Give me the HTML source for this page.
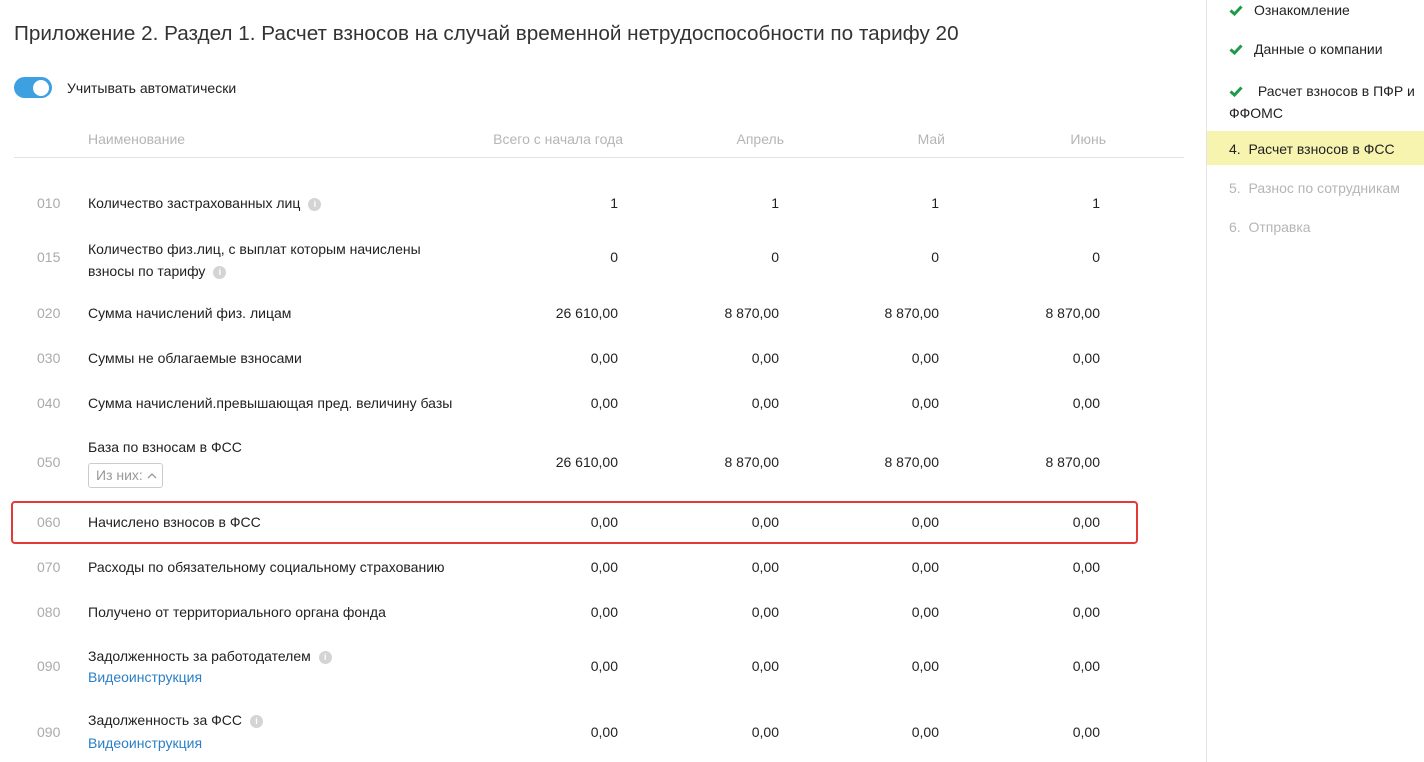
<!DOCTYPE html>
<html><head><meta charset="utf-8"><style>
body{margin:0;width:1424px;height:762px;position:relative;overflow:hidden;background:#fff;font-family:"Liberation Sans",Arial,sans-serif;font-size:14px;color:#222}
.a{position:absolute;white-space:nowrap}
.code{color:#aaa;left:37px}
.n{text-align:right;width:150px}
.g{color:#b5b5b5}
.i{display:inline-block;width:13px;height:13px;border-radius:50%;background:#d4d4d4;color:#fff;font-size:9px;text-align:center;line-height:13px;margin-left:8px;vertical-align:1px;font-weight:bold}
.lnk{color:#2a7fc6}
.ck{display:inline-block;width:14px;margin-right:11px;vertical-align:-1px}
</style></head><body>
<div class="a" style="left:14px;top:22px;font-size:20.7px;color:#333">Приложение 2. Раздел 1. Расчет взносов на случай временной нетрудоспособности по тарифу 20</div>
<div class="a" style="left:14px;top:77px;width:38px;height:21px;border-radius:11px;background:#3da0e0"><div style="position:absolute;right:3px;top:2.5px;width:16px;height:16px;border-radius:50%;background:#fff"></div></div>
<div class="a" style="left:67px;top:80px">Учитывать автоматически</div>
<div class="a g" style="left:88px;top:131px">Наименование</div>
<div class="a g n" style="left:473px;top:131px">Всего с начала года</div>
<div class="a g n" style="left:634px;top:131px">Апрель</div>
<div class="a g n" style="left:795px;top:131px">Май</div>
<div class="a g n" style="left:956px;top:131px">Июнь</div>
<div class="a" style="left:14px;top:157px;width:1170px;height:1px;background:#e3e3e3"></div>

<div class="a code" style="top:195px">010</div><div class="a" style="left:88px;top:195px">Количество застрахованных лиц<span class="i">i</span></div>
<div class="a code" style="top:249px">015</div><div class="a" style="left:88px;top:238px;line-height:22px">Количество физ.лиц, с выплат которым начислены<br>взносы по тарифу<span class="i">i</span></div>
<div class="a code" style="top:305px">020</div><div class="a" style="left:88px;top:305px">Сумма начислений физ. лицам</div>
<div class="a code" style="top:350px">030</div><div class="a" style="left:88px;top:350px">Суммы не облагаемые взносами</div>
<div class="a code" style="top:395px">040</div><div class="a" style="left:88px;top:395px">Сумма начислений.превышающая пред. величину базы</div>
<div class="a code" style="top:454px">050</div><div class="a" style="left:88px;top:439px">База по взносам в ФСС</div>
<div class="a" style="left:88px;top:463px;width:73px;height:23px;border:1px solid #ccc;border-radius:3px;color:#999;line-height:23px;text-indent:7px">Из них: <svg width="10" height="7" viewBox="0 0 10 7" style="vertical-align:1px"><path d="M1 6 L5 2 L9 6" fill="none" stroke="#999" stroke-width="1.3"/></svg></div>
<div class="a" style="left:11px;top:501px;width:1123px;height:39px;border:2px solid #e53935;border-radius:4px"></div>
<div class="a code" style="top:514px">060</div><div class="a" style="left:88px;top:514px">Начислено взносов в ФСС</div>
<div class="a code" style="top:559px">070</div><div class="a" style="left:88px;top:559px">Расходы по обязательному социальному страхованию</div>
<div class="a code" style="top:604px">080</div><div class="a" style="left:88px;top:604px">Получено от территориального органа фонда</div>
<div class="a code" style="top:658px">090</div><div class="a" style="left:88px;top:648px">Задолженность за работодателем<span class="i">i</span></div><div class="a lnk" style="left:88px;top:669px">Видеоинструкция</div>
<div class="a code" style="top:724px">090</div><div class="a" style="left:88px;top:712px">Задолженность за ФСС<span class="i">i</span></div><div class="a lnk" style="left:88px;top:735px">Видеоинструкция</div>

<div id="nums"></div>
<script>
var rows=[[195,"1","1","1","1"],[249,"0","0","0","0"],[305,"26 610,00","8 870,00","8 870,00","8 870,00"],[350,"0,00","0,00","0,00","0,00"],[395,"0,00","0,00","0,00","0,00"],[454,"26 610,00","8 870,00","8 870,00","8 870,00"],[514,"0,00","0,00","0,00","0,00"],[559,"0,00","0,00","0,00","0,00"],[604,"0,00","0,00","0,00","0,00"],[658,"0,00","0,00","0,00","0,00"],[724,"0,00","0,00","0,00","0,00"]];
var R=[618,779,939,1100],h="";
rows.forEach(function(r){for(var i=0;i<4;i++)h+='<div class="a n" style="left:'+(R[i]-150)+'px;top:'+r[0]+'px">'+r[i+1]+'</div>';});
document.getElementById('nums').innerHTML=h;
</script>

<div class="a" style="left:1206px;top:0;width:1px;height:762px;background:#e3e3e3"></div>
<div class="a" style="left:1207px;top:131px;width:217px;height:34px;background:#f7f4b0"></div>
<div class="a" style="left:1229px;top:2px"><svg class="ck" viewBox="0 0 14 11" height="11"><path d="M1.5 5.5 L5.5 9 L12.5 1.5" fill="none" stroke="#1f9a4a" stroke-width="3"/></svg>Ознакомление</div>
<div class="a" style="left:1229px;top:41px"><svg class="ck" viewBox="0 0 14 11" height="11"><path d="M1.5 5.5 L5.5 9 L12.5 1.5" fill="none" stroke="#1f9a4a" stroke-width="3"/></svg>Данные о компании</div>
<div class="a" style="left:1229px;top:80px;line-height:22px"><svg class="ck" viewBox="0 0 14 11" height="11"><path d="M1.5 5.5 L5.5 9 L12.5 1.5" fill="none" stroke="#1f9a4a" stroke-width="3"/></svg> Расчет взносов в ПФР и<br>ФФОМС</div>
<div class="a" style="left:1229px;top:141px">4.&nbsp; Расчет взносов в ФСС</div>
<div class="a g" style="left:1229px;top:180px">5.&nbsp; Разнос по сотрудникам</div>
<div class="a g" style="left:1229px;top:219px">6.&nbsp; Отправка</div>
</body></html>
